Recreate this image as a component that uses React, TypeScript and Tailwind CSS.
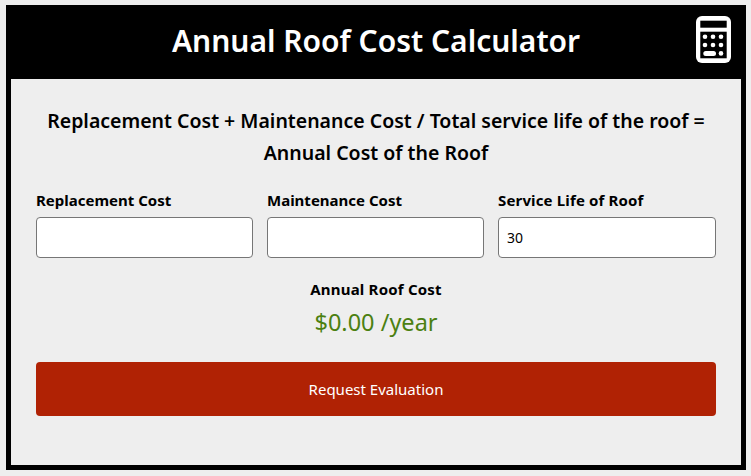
function Calc() {
  return (
    <svg width="35" height="47" viewBox="0 0 35 47" className="absolute left-[696px] top-[16px]" fill="none">
      <rect x="0" y="0" width="35" height="47" rx="6" fill="#fff" />
      <rect x="4.3" y="4.7" width="26.4" height="7" fill="#000" />
      <rect x="4.3" y="15.7" width="26.4" height="26.6" fill="#000" />
      {[20.7, 29].map((y) => [9, 17, 25].map((x) => <circle key={`${x}-${y}`} cx={x} cy={y} r="2.3" fill="#fff" />))}
      <rect x="7.3" y="35" width="12.7" height="5" rx="2.5" fill="#fff" />
      <circle cx="25" cy="37.4" r="2.3" fill="#fff" />
    </svg>
  );
}
function Field({ label, value, className, labelClass }: { label: string; value?: string; className: string; labelClass?: string }) {
  return (
    <div className={`flex flex-col ${className}`}>
      <label className={`h-[29px] text-[15px] leading-[25px] font-bold text-black ${labelClass ?? ""}`}>{label}</label>
      <input readOnly value={value ?? ""} className="h-[41px] w-full rounded-[4px] border border-[#767676] bg-white px-2 text-[14px] text-black outline-none" />
    </div>
  );
}
export default function App() {
  return (
    <div className="h-[476px] w-[751px] bg-[#eeeeee] pl-[6px] pt-[5px] font-['Noto_Sans','Open_Sans',sans-serif]">
      <div className="h-[465px] w-[740px] border-[5px] border-t-0 border-black">
        <header className="relative -mx-[5px] flex h-[74px] items-center justify-center bg-black pb-[4px] text-[30px] font-semibold text-white">
          Annual Roof Cost Calculator
        </header>
        <div className="flex flex-col px-[25px] pt-[26px]">
          <h2 className="text-center text-[19.5px] leading-[32px] font-semibold text-black">
            Replacement Cost + Maintenance Cost / Total service life of the roof =<br />Annual Cost of the Roof
          </h2>
          <div className="mt-[19px] flex gap-[14px]">
            <Field label="Replacement Cost" className="w-[217px]" />
            <Field label="Maintenance Cost" className="w-[217px]" />
            <Field label="Service Life of Roof" value="30" className="w-[218px]" labelClass="tracking-[0.15px]" />
          </div>
          <div className="mt-[19px] text-center text-[15px] leading-[25px] font-bold tracking-[0.2px] text-black">Annual Roof Cost</div>
          <div className="mt-[4px] text-center text-[23.5px] leading-[32px] text-[#4b8011]">$0.00 /year</div>
          <button className="mt-[24px] h-[54px] w-full rounded-[4px] bg-[#b02204] text-[15px] text-white">Request Evaluation</button>
        </div>
      </div>
      <Calc />
    </div>
  );
}
